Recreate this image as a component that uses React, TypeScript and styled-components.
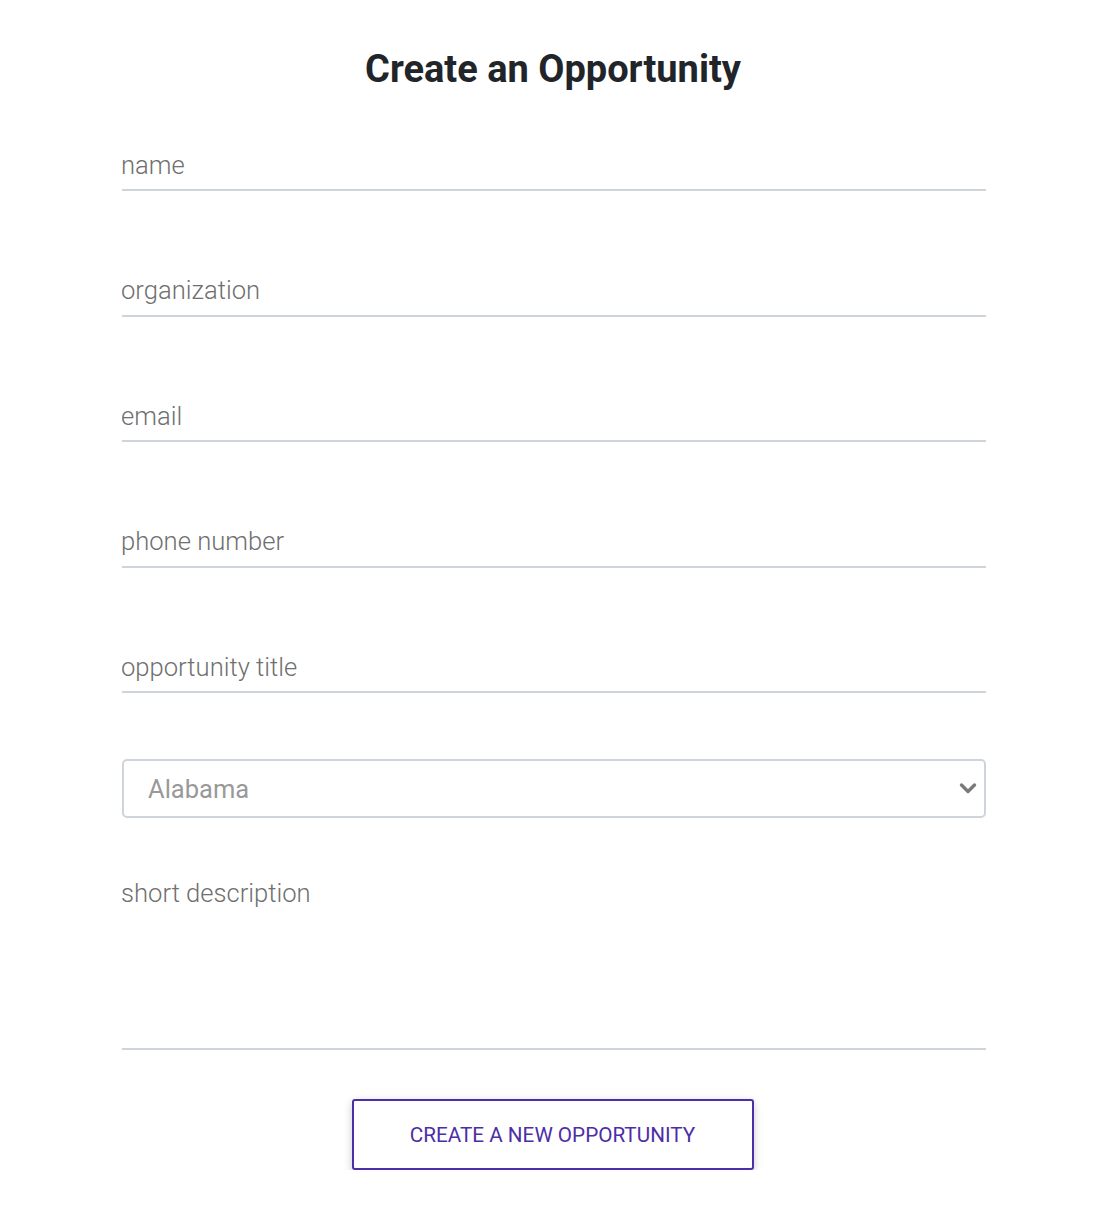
import React from "react";
import styled, { createGlobalStyle } from "styled-components";

const Global = createGlobalStyle`
  html, body { margin: 0; padding: 0; background: #fff; }
  body { font-family: Roboto, "Noto Sans", Arial, sans-serif; }
  * { box-sizing: border-box; }
`;

const Page = styled.main`
  width: 1096px;
  display: flex;
  flex-direction: column;
  align-items: center;
`;

const Title = styled.h1`
  margin: 47px 0 0 10px;
  font-size: 38px;
  line-height: 44px;
  font-weight: 700;
  color: #212529;
  letter-spacing: 0;
`;

const Form = styled.form`
  width: 864px;
  margin-left: 12px;
  display: flex;
  flex-direction: column;
  padding-top: 49px;
`;

const TextInput = styled.input`
  width: 100%;
  height: 51px;
  margin-bottom: 74.5px;
  border: none;
  border-bottom: 2px solid #ced4da;
  outline: none;
  padding: 0;
  text-indent: -1px;
  font-family: Roboto, sans-serif;
  font-size: 25.6px;
  font-weight: 300;
  color: #495057;
  background: transparent;
  &::placeholder { color: #6f6f6f; opacity: 1; }
`;

const SelectWrap = styled.div`
  position: relative;
  margin-top: -8.5px;
`;

const Select = styled.select`
  appearance: none;
  width: 100%;
  height: 59px;
  border: 2px solid #ced4da;
  border-radius: 5px;
  padding: 0 0 0 24px;
  font-family: Roboto, sans-serif;
  font-size: 25.5px;
  font-weight: 400;
  color: #999;
  background: #fff;
  outline: none;
`;

const Chevron = styled.svg`
  position: absolute;
  right: 9px;
  top: 22px;
  pointer-events: none;
`;

const TextArea = styled.textarea`
  width: 100%;
  height: 175px;
  margin-top: 57px;
  border: none;
  border-bottom: 2px solid #ced4da;
  outline: none;
  resize: none;
  padding: 0;
  text-indent: -1px;
  font-family: Roboto, sans-serif;
  font-size: 25.6px;
  line-height: 36px;
  font-weight: 300;
  color: #495057;
  &::placeholder { color: #6f6f6f; opacity: 1; }
`;

const Button = styled.button`
  align-self: center;
  margin: 49px 0 0 -3px;
  width: 402px;
  height: 71px;
  background: #fff;
  border: 2px solid #4c2ea6;
  border-radius: 3px;
  box-shadow: 0 3px 8px rgba(0, 0, 0, 0.22);
  color: #4c2ea6;
  font-family: Roboto, sans-serif;
  font-size: 20.7px;
  font-weight: 400;
  text-transform: uppercase;
  cursor: pointer;
`;

const fields = ["name", "organization", "email", "phone number", "opportunity title"];

export default function App() {
  return (
    <Page>
      <Global />
      <Title>Create an Opportunity</Title>
      <Form onSubmit={(e) => e.preventDefault()}>
        {fields.map((f) => (
          <TextInput key={f} placeholder={f} />
        ))}
        <SelectWrap>
          <Select defaultValue="Alabama">
            <option>Alabama</option>
            <option>Alaska</option>
            <option>Arizona</option>
          </Select>
          <Chevron width="18" height="14" viewBox="0 0 18 14">
            <path d="M2.5 4 L9 10.5 L15.5 4" fill="none" stroke="#7a7a7a" strokeWidth="3.4" strokeLinecap="round" strokeLinejoin="round" />
          </Chevron>
        </SelectWrap>
        <TextArea placeholder="short description" />
        <Button type="submit">Create a new opportunity</Button>
      </Form>
    </Page>
  );
}
